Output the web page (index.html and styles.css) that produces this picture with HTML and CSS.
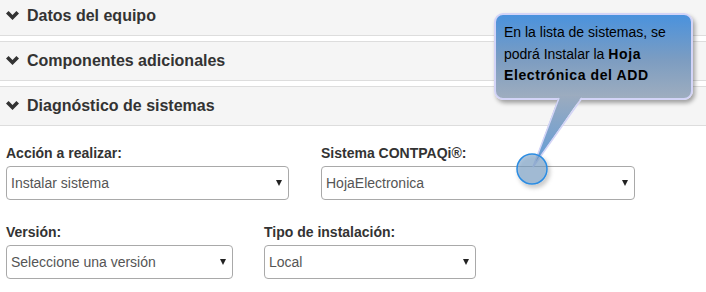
FILE: index.html
```html
<!DOCTYPE html>
<html lang="es">

<head>
    <meta charset="UTF-8">
    <title>Diagnóstico de sistemas</title>
    <link rel="stylesheet" href="styles.css">
</head>

<body>
    <div class="panel-group">
        <div class="panel">
            <div class="panel-heading">
                <svg class="chevron" width="13" height="9" viewBox="0 0 13 9"><polygon points="0,2.6 2.6,0 6.5,3.9 10.4,0 13,2.6 6.5,9" /></svg>
                <span>Datos del equipo</span>
            </div>
        </div>
        <div class="panel">
            <div class="panel-heading">
                <svg class="chevron" width="13" height="9" viewBox="0 0 13 9"><polygon points="0,2.6 2.6,0 6.5,3.9 10.4,0 13,2.6 6.5,9" /></svg>
                <span>Componentes adicionales</span>
            </div>
        </div>
        <div class="panel">
            <div class="panel-heading">
                <svg class="chevron" width="13" height="9" viewBox="0 0 13 9"><polygon points="0,2.6 2.6,0 6.5,3.9 10.4,0 13,2.6 6.5,9" /></svg>
                <span>Diagnóstico de sistemas</span>
            </div>
            <div class="panel-body">
                <div class="row row-a">
                    <div class="field accion">
                        <label>Acción a realizar:</label>
                        <div class="select">Instalar sistema</div>
                    </div>
                    <div class="field sistema">
                        <label>Sistema CONTPAQi®:</label>
                        <div class="select">HojaElectronica</div>
                    </div>
                </div>
                <div class="row row-b">
                    <div class="field version">
                        <label>Versión:</label>
                        <div class="select">Seleccione una versión</div>
                    </div>
                    <div class="field tipo">
                        <label>Tipo de instalación:</label>
                        <div class="select">Local</div>
                    </div>
                </div>
            </div>
        </div>
    </div>

    <div class="callout">
        <p>En la lista de sistemas, se</p>
        <p>podrá Instalar la <b>Hoja</b></p>
        <p><b>Electrónica del ADD</b></p>
    </div>
    <svg class="pointer" width="706" height="292" viewBox="0 0 706 292">
        <defs>
            <linearGradient id="tail" x1="0" y1="0" x2="0" y2="1">
                <stop offset="0" stop-color="#9babbf" />
                <stop offset="1" stop-color="#5f9bd9" />
            </linearGradient>
            <filter id="sombra" x="-50%" y="-50%" width="200%" height="200%">
                <feDropShadow dx="2" dy="3" stdDeviation="2" flood-opacity="0.3" />
            </filter>
        </defs>
        <polygon points="559,96 582,96 533,167" fill="url(#tail)" />
        <polyline points="559,98 533,167 582,98" fill="none" stroke="#d3d4f7" stroke-width="1.5" />
        <circle cx="532" cy="169" r="15" fill="rgba(120,160,200,0.6)" stroke="#2c8ce2" stroke-width="1.5" filter="url(#sombra)" />
    </svg>
</body></html>
```

FILE: styles.css
```css
* {
    box-sizing: border-box;
    padding: 0;
    margin: 0;
}

body {
    font-family: "Liberation Sans", Arial, sans-serif;
    color: #333;
    background: #fff;
    width: 706px;
    height: 292px;
    overflow: hidden;
    position: relative;
}

.panel-group {
    margin-top: -4px;
}

.panel {
    border-top: 1px solid #ddd;
}

.panel + .panel {
    margin-top: 5px;
}

.panel-heading {
    display: flex;
    align-items: center;
    gap: 8px;
    height: 39px;
    padding-left: 6px;
    background: #f5f5f5;
    border-bottom: 1px solid #ddd;
    font-size: 16px;
    font-weight: bold;
}

.chevron {
    fill: #333;
    margin-top: -1px;
}

.panel-body {
    padding: 17px 0 0 6px;
}

.row {
    display: flex;
    gap: 32px;
    margin-bottom: 22px;
}

.row-b {
    gap: 31px;
}

.accion { width: 283px; }
.sistema { width: 314px; }
.version { width: 227px; }
.tipo { width: 212px; }

label {
    display: block;
    font-size: 14px;
    font-weight: bold;
    line-height: 20px;
    margin-bottom: 3px;
}

.select {
    display: flex;
    align-items: center;
    justify-content: space-between;
    height: 34px;
    padding: 0 6px 0 4px;
    border: 1px solid #a9a9a9;
    border-radius: 4px;
    font-size: 14px;
    color: #555;
}

.select::after {
    content: "";
    border-left: 3.5px solid transparent;
    border-right: 3.5px solid transparent;
    border-top: 6px solid #222;
}

.callout {
    position: absolute;
    left: 494px;
    top: 13px;
    width: 199px;
    height: 87px;
    padding: 7px 4px 0 8px;
    border: 2px solid #d3d4f7;
    border-radius: 9px;
    background: linear-gradient(#4a92dd, #7d9dc1 55%, #9eadbf);
    box-shadow: 2px 3px 4px rgba(0, 0, 0, .35);
    font-size: 14px;
    line-height: 21.5px;
    color: #000;
    white-space: nowrap;
}

.callout b {
    letter-spacing: 0.6px;
}

.pointer {
    position: absolute;
    left: 0;
    top: 0;
    pointer-events: none;
}
```
